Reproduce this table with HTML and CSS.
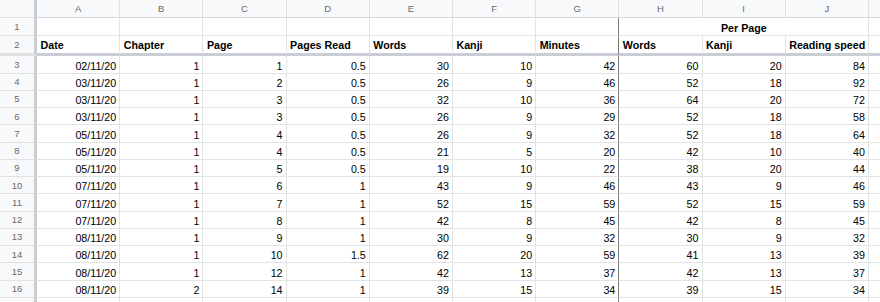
FILE: index.html
```html
<!DOCTYPE html>
<html>
<head>
<meta charset="utf-8">
<link rel="stylesheet" href="styles.css">
</head>
<body>
<div class="sheet">
  <div class="row colhead">
    <div class="rh"></div>
    <div class="c">A</div><div class="c">B</div><div class="c">C</div><div class="c">D</div><div class="c">E</div>
    <div class="c">F</div><div class="c">G</div><div class="c">H</div><div class="c">I</div><div class="c">J</div>
    <div class="c k"></div>
  </div>
  <div class="row r1">
    <div class="rh">1</div>
    <div class="c"></div><div class="c"></div><div class="c"></div><div class="c"></div><div class="c"></div>
    <div class="c"></div><div class="c g"></div>
    <div class="c merged b">Per Page</div>
    <div class="c k"></div>
  </div>
  <div class="row r2 frz">
    <div class="rh">2</div>
    <div class="c b">Date</div><div class="c b">Chapter</div><div class="c b">Page</div><div class="c b">Pages Read</div><div class="c b">Words</div>
    <div class="c b">Kanji</div><div class="c b g">Minutes</div><div class="c b">Words</div><div class="c b">Kanji</div><div class="c b">Reading speed</div>
    <div class="c k"></div>
  </div>
  <div id="body"></div>
</div>
<script src="app.js"></script>
</body>
</html>
```
FILE: app.js
```js
const data = [
  ["02/11/20",1,1,0.5,30,10,42,60,20,84],
  ["03/11/20",1,2,0.5,26,9,46,52,18,92],
  ["03/11/20",1,3,0.5,32,10,36,64,20,72],
  ["03/11/20",1,3,0.5,26,9,29,52,18,58],
  ["05/11/20",1,4,0.5,26,9,32,52,18,64],
  ["05/11/20",1,4,0.5,21,5,20,42,10,40],
  ["05/11/20",1,5,0.5,19,10,22,38,20,44],
  ["07/11/20",1,6,1,43,9,46,43,9,46],
  ["07/11/20",1,7,1,52,15,59,52,15,59],
  ["07/11/20",1,8,1,42,8,45,42,8,45],
  ["08/11/20",1,9,1,30,9,32,30,9,32],
  ["08/11/20",1,10,1.5,62,20,59,41,13,39],
  ["08/11/20",1,12,1,42,13,37,42,13,37],
  ["08/11/20",2,14,1,39,15,34,39,15,34],
  ["","","","","","","","","",""]
];
const body = document.getElementById("body");
let html = "";
data.forEach((r, i) => {
  const label = r[0] === "" ? "" : (i + 3);
  html += '<div class="row d"><div class="rh">' + label + '</div>';
  r.forEach((v, j) => {
    html += '<div class="c num' + (j === 6 ? ' g' : '') + '">' + v + '</div>';
  });
  html += '<div class="c k"></div></div>';
});
body.outerHTML = html;
```
FILE: styles.css
```css
html, body {
  margin: 0;
  padding: 0;
  background: #fff;
  overflow: hidden;
}
.sheet {
  width: 880px;
  height: 302px;
  overflow: hidden;
  font-family: "Liberation Sans", Arial, sans-serif;
  font-size: 10.7px;
  color: #000;
}
.row {
  display: flex;
  height: 17.25px;
}
.row > div {
  box-sizing: border-box;
  flex: none;
  border-right: 1px solid #e2e3e3;
  border-bottom: 1px solid #e2e3e3;
  display: flex;
  align-items: flex-end;
  padding: 0 3px 1px 3.5px;
  white-space: nowrap;
  overflow: hidden;
}
.rh {
  width: 37px;
  background: #f8f9fa;
  border-right: 3px solid #c9ced4 !important;
  justify-content: center;
  align-items: center !important;
  padding: 0 !important;
  font-size: 9.5px;
  color: #6a6a6a;
}
.row > .rh {
  border-bottom-color: #e0e1e3;
}
.c {
  width: 83.2px;
}
.row > .k {
  flex: 1 1 auto;
  width: auto;
  border-right: none;
}
.colhead {
  height: 18px;
}
.colhead > div {
  background: #f8f9fa;
  justify-content: center;
  align-items: center;
  padding: 0;
  font-size: 9.5px;
  color: #6a6a6a;
  border-bottom-color: #d6d8db;
  border-right-color: #e0e1e3;
}
.r1 {
  height: 18px;
}
.r2 {
  height: 20.3px;
}
.frz > div {
  border-bottom: 3px solid #c9ced4;
  padding-bottom: 2px;
}
.merged {
  width: 249.6px;
  justify-content: center;
}
.b {
  font-weight: bold;
}
.num {
  justify-content: flex-end;
}
.row > .g {
  border-right: 1px solid #7a7a7a;
}
```
